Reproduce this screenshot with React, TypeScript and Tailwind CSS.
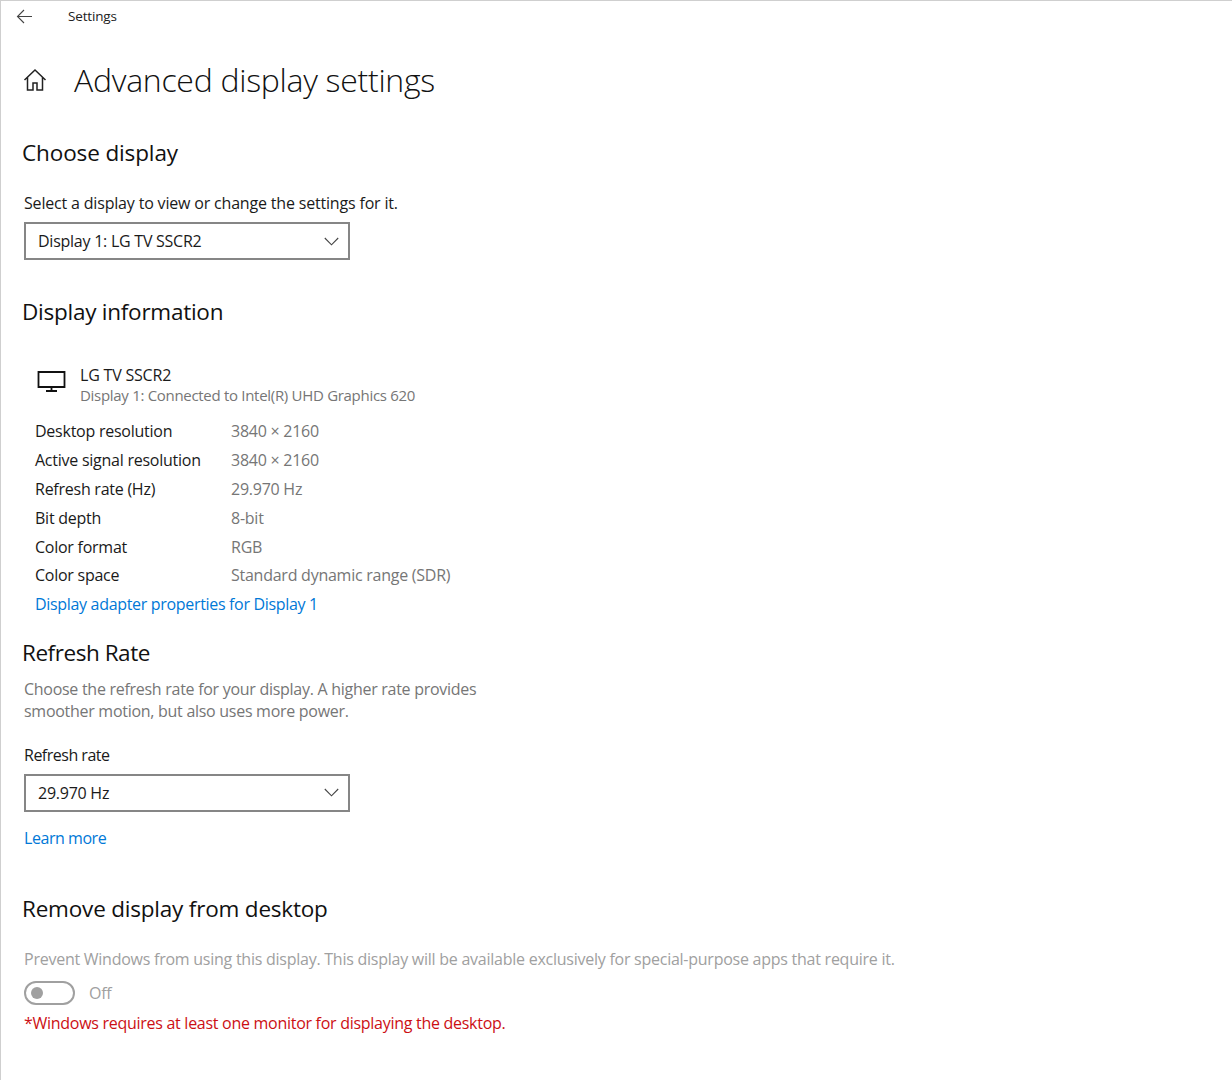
const rows = [
  ['Desktop resolution', '3840 × 2160'],
  ['Active signal resolution', '3840 × 2160'],
  ['Refresh rate (Hz)', '29.970 Hz'],
  ['Bit depth', '8-bit'],
  ['Color format', 'RGB'],
  ['Color space', 'Standard dynamic range (SDR)'],
]

function Heading({ children, className }: { children: string; className: string }) {
  return <h2 className={`h-8 pl-[21px] text-[22.5px] leading-8 text-[#111] ${className}`}>{children}</h2>
}

function Select({ value }: { value: string }) {
  return (
    <div className="ml-[23px] flex h-[38px] w-[326px] items-center justify-between border-2 border-[#868686] pl-3 pr-[9px] text-[16px] tracking-[-0.25px] text-[#1a1a1a]">
      {value}
      <svg className="h-[9px] w-[15px]" viewBox="0 0 15 9" fill="none" stroke="#444" strokeWidth="1.1">
        <path d="M.8 1 7.5 7.8 14.2 1" />
      </svg>
    </div>
  )
}

export default function App() {
  return (
    <div className="h-[1080px] w-[1232px] overflow-hidden border-l border-t border-l-[#cfcfcf] border-t-[#cfcfcf] bg-white font-['Open_Sans',sans-serif]">
      <div className="flex h-[31px] items-center">
        <svg className="ml-[15px] size-[18px]" viewBox="0 0 18 18" fill="none" stroke="#444" strokeWidth="1.1">
          <path d="M1.5 8.5H16M8 2 1.5 8.5 8 15" />
        </svg>
        <span className="ml-[34px] text-[13.5px] tracking-[-0.17px] text-[#222]">Settings</span>
      </div>

      <div className="mt-[24px] flex h-[48px] items-center">
        <svg className="ml-[21px] size-[26px]" viewBox="0 0 26 26" fill="none" stroke="#222" strokeWidth="1.5">
          <path d="M2.5 13 13 3l10.5 10M5.5 10.5V23h5.5v-7h4v7h5.5V10.5" />
        </svg>
        <h1 className="ml-[26px] text-[32px] font-light leading-[48px] tracking-[-0.28px] text-[#111]">Advanced display settings</h1>
      </div>

      <Heading className="mt-[33px] tracking-[-0.12px]">Choose display</Heading>
      <p className="mt-[22px] h-6 pl-[23px] text-[16px] leading-6 tracking-[-0.18px] text-[#1a1a1a]">Select a display to view or change the settings for it.</p>
      <div className="mt-[7px]"><Select value="Display 1: LG TV SSCR2" /></div>

      <Heading className="mt-[36px] tracking-[-0.25px]">Display information</Heading>

      <div className="mt-[37px] flex pl-[36px]">
        <svg className="mt-[5px] h-[22px] w-[29px]" viewBox="0 0 29 22" fill="none" stroke="#111" strokeWidth="1.8">
          <path d="M1.5 2h26v15h-26zM14.5 17v4M9 21h11" />
        </svg>
        <div className="ml-[14px]">
          <p className="h-[20px] text-[16px] leading-[20px] tracking-[-0.2px] text-[#1a1a1a]">LG TV SSCR2</p>
          <p className="h-[20px] text-[15px] leading-[20px] tracking-[-0.3px] text-[#767676]">Display 1: Connected to Intel(R) UHD Graphics 620</p>
        </div>
      </div>

      <dl className="mt-[12px] pl-[34px]">
        {rows.map(([label, value]) => (
          <div className="flex h-[28.8px] items-center text-[16px] tracking-[-0.25px]" key={label}>
            <dt className="w-[196px] text-[#1a1a1a]">{label}</dt>
            <dd className="text-[#767676]">{value}</dd>
          </div>
        ))}
      </dl>
      <a className="block h-[29px] pl-[34px] text-[16px] leading-[29px] tracking-[-0.32px] text-[#0078d7]">Display adapter properties for Display 1</a>

      <Heading className="mt-[18px] tracking-[-0.45px]">Refresh Rate</Heading>
      <p className="mt-[9px] w-[490px] pl-[23px] text-[16px] leading-[22px] tracking-[-0.28px] text-[#767676]">
        Choose the refresh rate for your display. A higher rate provides smoother motion, but also uses more power.
      </p>
      <p className="mt-[21px] h-6 pl-[23px] text-[16px] leading-6 tracking-[-0.5px] text-[#1a1a1a]">Refresh rate</p>
      <div className="mt-[7px]"><Select value="29.970 Hz" /></div>
      <a className="mt-[14px] block h-6 pl-[23px] text-[16px] leading-6 tracking-[-0.45px] text-[#0078d7]">Learn more</a>

      <Heading className="mt-[43px] tracking-[-0.2px]">Remove display from desktop</Heading>
      <p className="mt-[22px] h-6 pl-[23px] text-[16px] leading-6 tracking-[-0.25px] text-[#a0a0a0]">
        Prevent Windows from using this display. This display will be available exclusively for special-purpose apps that require it.
      </p>
      <div className="mt-[10px] flex h-6 items-center pl-[23px]">
        <span className="flex h-[24px] w-[51px] items-center rounded-full border-2 border-[#a0a0a0] pl-[5px]">
          <span className="size-[12px] rounded-full bg-[#a0a0a0]" />
        </span>
        <span className="ml-[14px] text-[16px] tracking-[-0.25px] text-[#a0a0a0]">Off</span>
      </div>
      <p className="mt-[6px] h-6 pl-[23px] text-[16px] leading-6 tracking-[-0.28px] text-[#cc0f14]">*Windows requires at least one monitor for displaying the desktop.</p>
    </div>
  )
}
